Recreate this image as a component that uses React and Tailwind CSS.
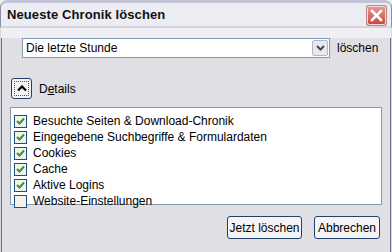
import { useState } from 'react'

const items = [
  { label: 'Besuchte Seiten & Download-Chronik', checked: true },
  { label: 'Eingegebene Suchbegriffe & Formulardaten', checked: true },
  { label: 'Cookies', checked: true },
  { label: 'Cache', checked: true },
  { label: 'Aktive Logins', checked: true },
  { label: 'Website-Einstellungen', checked: false },
]

const font = { fontFamily: '"Liberation Sans", Arial, sans-serif' }

function CheckBox({ checked }) {
  return (
    <span className="w-[13px] h-[13px] shrink-0 border border-[#1c5180] bg-[#f2f2ef] flex items-center justify-center">
      {checked && (
        <svg width="9" height="9" viewBox="0 0 9 9">
          <path d="M1 4 L3.5 6.5 L8 1.5" fill="none" stroke="#21a121" strokeWidth="2" />
        </svg>
      )}
    </span>
  )
}

function CloseIcon() {
  return (
    <svg width="21" height="21" viewBox="0 0 21 21">
      <defs>
        <linearGradient id="cl" x1="0" y1="0" x2="0" y2="1">
          <stop offset="0" stopColor="#e99a91" />
          <stop offset="1" stopColor="#c8463c" />
        </linearGradient>
      </defs>
      <rect x="0" y="0" width="21" height="21" rx="3" fill="#b98a85" />
      <rect x="1.5" y="1.5" width="18" height="18" rx="2" fill="url(#cl)" stroke="#f6dcd8" />
      <path d="M6 6 L15 15 M15 6 L6 15" stroke="#ffffff" strokeWidth="2.6" strokeLinecap="square" />
    </svg>
  )
}

export default function App() {
  const [rows, setRows] = useState(items)

  const toggle = (i) => {
    setRows(rows.map((r, j) => (j === i ? { ...r, checked: !r.checked } : r)))
  }

  return (
    <div className="w-[392px] h-[252px] flex flex-col bg-[#f0f0f4] text-black" style={font}>
      {/* Title bar */}
      <div className="h-[28px] shrink-0 rounded-t-[7px] border-x border-[#8d8ca6] border-t-[3px] border-t-[#c4c3d5] border-b-[2px] border-b-[#d4d4df] bg-[#ececf3] flex items-center pl-[6px] pr-[4px]">
        <span className="text-[13px] font-bold text-[#111] tracking-[0.1px]">Neueste Chronik löschen</span>
        <div className="ml-auto mt-[1px] flex">
          <CloseIcon />
        </div>
      </div>

      {/* Body with frame */}
      <div className="flex-1 border-x border-b-2 border-[#d9d8e2]">
        <div className="h-full border-x border-b border-[#6f6e8c] bg-[#e0dfe3] px-[8px] text-[12px] leading-[14px]">
          {/* Time range */}
          <div className="mt-[10px] ml-[12px] flex items-center">
            <div className="w-[308px] h-[20px] border border-[#7f9db9] bg-white flex items-center">
              <span className="pl-[3px] flex-1">Die letzte Stunde</span>
              <span className="w-[16px] h-[16px] mr-[1px] rounded-[2px] border border-[#b6b5c6] bg-[#e8e8ee] flex items-center justify-center">
                <svg width="9" height="6" viewBox="0 0 9 6">
                  <path d="M1 1 L4.5 4.5 L8 1" fill="none" stroke="#3d4a66" strokeWidth="2" />
                </svg>
              </span>
            </div>
            <span className="ml-[7px]">löschen</span>
          </div>

          {/* Details toggle */}
          <div className="mt-[20px] ml-[1px] flex items-center">
            <div className="w-[21px] h-[21px] rounded-[3px] border border-[#22406c] bg-[#f4f4f6] p-[2px]">
              <span className="w-full h-full border border-dotted border-[#555] flex items-center justify-center">
                <svg width="10" height="7" viewBox="0 0 10 7">
                  <path d="M1 5.5 L5 1.5 L9 5.5" fill="none" stroke="#000" strokeWidth="2.2" />
                </svg>
              </span>
            </div>
            <span className="ml-[7px]">
              D<span className="underline">e</span>tails
            </span>
          </div>

          {/* Item list */}
          <div className="mt-[8px] h-[98px] border border-[#8a9bb0] bg-white pt-[5px] pl-[3px]">
            {rows.map((r, i) => (
              <div key={r.label} className="h-[16px] flex items-center gap-[6px] cursor-default" onClick={() => toggle(i)}>
                <CheckBox checked={r.checked} />
                <span>{r.label}</span>
              </div>
            ))}
          </div>

          {/* Buttons */}
          <div className="mt-[11px] mr-[2px] flex justify-end gap-[12px]">
            <div className="w-[75px] h-[23px] rounded-[3px] border border-[#22406c] bg-[#f4f4f6] flex items-center justify-center">
              Jetzt löschen
            </div>
            <div className="w-[66px] h-[23px] rounded-[3px] border border-[#22406c] bg-[#f4f4f6] flex items-center justify-center">
              Abbrechen
            </div>
          </div>
        </div>
      </div>
    </div>
  )
}
